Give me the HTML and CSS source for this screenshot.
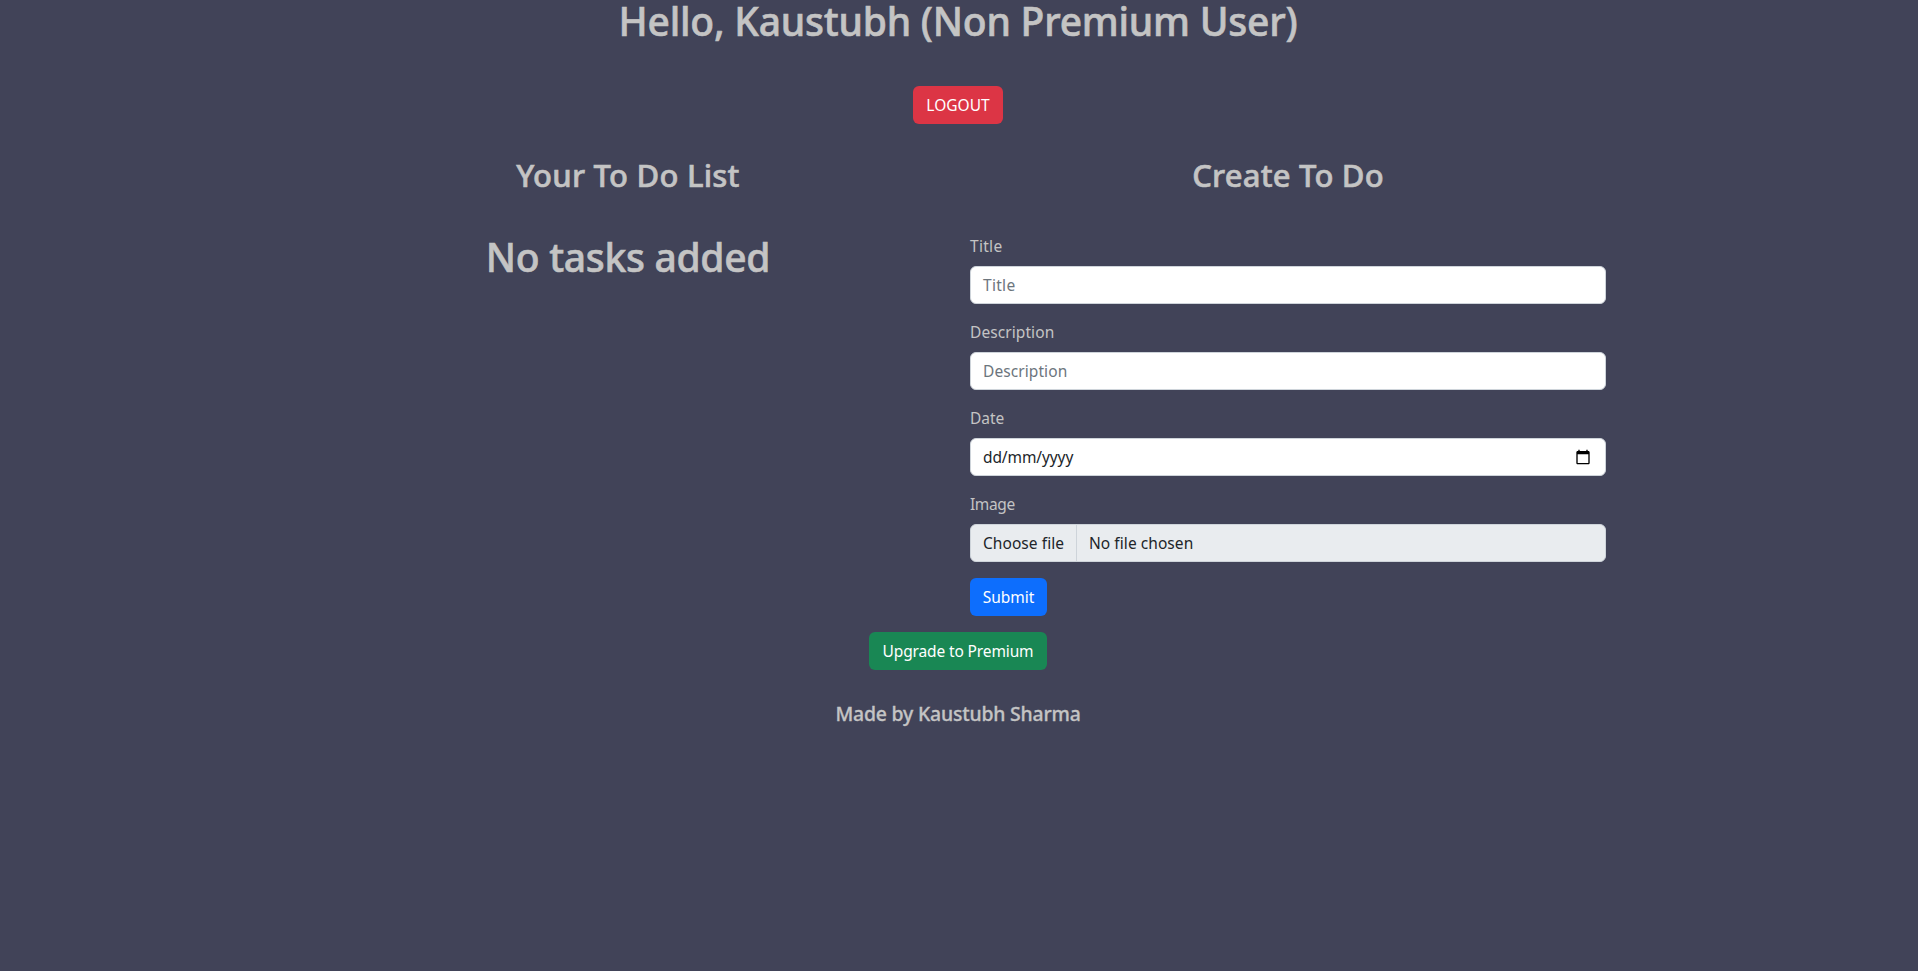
FILE: index.html
```html
<!DOCTYPE html>
<html lang="en-GB">
<head>
<meta charset="utf-8">
<title>To Do List</title>
<link rel="stylesheet" href="styles.css">
</head>
<body>
<h1 class="greeting">Hello, Kaustubh (Non Premium User)</h1>
<div class="center logout-row"><button class="btn btn-danger">LOGOUT</button></div>
<main class="container">
  <section class="col">
    <h2 class="list-title">Your To Do List</h2>
    <h1 class="empty">No tasks added</h1>
  </section>
  <section class="col">
    <h2 class="create-title">Create To Do</h2>
    <form class="form">
      <label class="label l-title">Title</label>
      <div class="control placeholder l-title">Title</div>
      <label class="label l-desc">Description</label>
      <div class="control placeholder l-desc">Description</div>
      <label class="label">Date</label>
      <div class="control date"><span>dd/mm/yyyy</span>
        <svg class="calendar" viewBox="0 0 24 24"><path d="M20 3h-1V1h-2v2H7V1H5v2H4c-1.100 0-2 .9-2 2v16c0 1.100.9 2 2 2h16c1.100 0 2-.9 2-2V5c0-1.100-.9-2-2-2zm0 18H4V8h16v13z"/></svg>
      </div>
      <label class="label l-image">Image</label>
      <div class="control file"><span class="choose">Choose file</span><span class="chosen">No file chosen</span></div>
      <button class="btn btn-primary" type="button">Submit</button>
    </form>
  </section>
</main>
<div class="upgrade-row"><button class="btn btn-success">Upgrade to Premium</button></div>
<footer class="footer">Made by Kaustubh Sharma</footer>
</body>
</html>
```
FILE: styles.css
```css
* { box-sizing: border-box; }
body {
  margin: 0;
  padding-right: 2px;
  min-height: 971px;
  background: #414358;
  color: #c4c4c4;
  font: 15.5px/24px "Noto Sans", sans-serif;
}
h1, h2 {
  margin: 0;
  font-weight: 500;
  text-align: center;
  white-space: nowrap;
  -webkit-text-stroke: 0.6px currentColor;
}
h1 { font-size: 39px; line-height: 48px; }
h2 { font-size: 31px; line-height: 38px; }
.greeting { line-height: 42px; letter-spacing: -0.22px; }
.center { display: flex; justify-content: center; }
.logout-row { margin: 44px 0 32px; }
.container { display: flex; width: 1320px; margin: 0 auto; }
.col { width: 50%; padding: 0 12px; }
.list-title { letter-spacing: 0.24px; }
.create-title { letter-spacing: 0.2px; }
.empty { margin-top: 39px; letter-spacing: -0.3px; }
.form { margin-top: 40px; }
.label { display: block; margin-bottom: 8px; }
.l-title { letter-spacing: 0.3px; }
.l-desc { letter-spacing: 0.08px; }
.l-image { letter-spacing: -0.4px; }
.control {
  display: flex;
  align-items: center;
  height: 38px;
  margin-bottom: 16px;
  padding: 0 12px;
  border: 1px solid #ced4da;
  border-radius: 6px;
  background: #fff;
  color: #212529;
}
.placeholder { color: #6c757d; }
.date { justify-content: space-between; padding-right: 14px; letter-spacing: -0.1px; }
.calendar { width: 16px; height: 16px; fill: #000; }
.file { background: #e9ecef; letter-spacing: 0.06px; }
.choose { width: 94px; line-height: 36px; border-right: 1px solid #ced4da; }
.chosen { margin-left: 12px; }
.btn {
  display: block;
  height: 38px;
  padding: 0;
  border: 0;
  border-radius: 6px;
  color: #fff;
  font: inherit;
  white-space: nowrap;
}
.btn-danger { width: 90px; background: #dc3545; }
.btn-primary { width: 77px; background: #0d6efd; }
.btn-success { width: 178px; background: #198754; letter-spacing: -0.13px; }
.upgrade-row { margin: 16px 0 32px 869px; }
.footer {
  text-align: center;
  font-size: 19.4px;
  font-weight: 500;
  letter-spacing: -0.18px;
  -webkit-text-stroke: 0.3px currentColor;
}
```
